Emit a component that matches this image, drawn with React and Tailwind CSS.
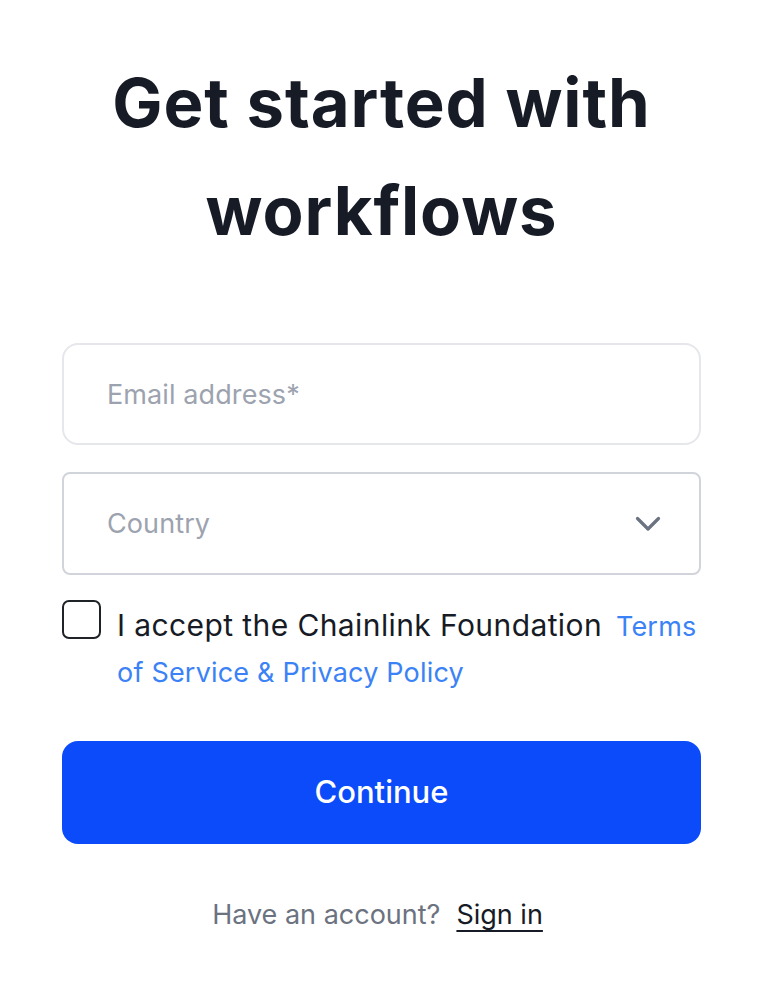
import React from "react";

export default function App() {
  return (
    <div className="min-h-screen bg-white" style={{ fontFamily: "Inter, 'Noto Sans', sans-serif" }}>
      <div className="flex flex-col pl-[62px] pr-[63px] pt-[49px]">
        <h1 className="text-center text-[67px] font-bold leading-[108px] text-[#161b26] tracking-[0.9px]">
          Get started with
          <br />
          workflows
        </h1>

        <div className="mt-[78px] flex flex-col gap-[27px]">
          <div className="flex h-[102px] items-center rounded-[16px] border-2 border-[#e5e7eb] px-[43px] pt-[2px]">
            <span className="text-[27px] text-[#9ca3af] tracking-[0.1px]">Email address*</span>
          </div>
          <div className="flex h-[103px] items-center justify-between rounded-[8px] border-2 border-[#d1d5db] pl-[43px] pr-[38px]">
            <span className="text-[27px] text-[#9ca3af] tracking-[0.1px] pt-[2px]">Country</span>
            <svg width="26" height="16" viewBox="0 0 26 16" fill="none">
              <path d="M2.5 2.5 L13 13 L23.5 2.5" stroke="#6b7280" strokeWidth="3.2" strokeLinecap="round" strokeLinejoin="round" />
            </svg>
          </div>
        </div>

        <div className="mt-[25px] flex items-start gap-[16px]">
          <div className="h-[39px] w-[39px] shrink-0 rounded-[7px] border-2 border-[#1f2328]" />
          <p className="mt-[3px] leading-[45px] text-[30px] tracking-[0.4px] text-[#161b26]">
            I accept the Chainlink Foundation{" "}
            <a className="ml-[5px] text-[27px] tracking-[0.2px] text-[#3b82f6]">Terms of Service &amp; Privacy Policy</a>
          </p>
        </div>

        <button className="mt-[46px] flex h-[103px] items-center justify-center rounded-[16px] bg-[#0b4bf9] text-[31px] font-medium text-white">
          Continue
        </button>

        <div className="mt-[51px] flex justify-center gap-[16px] pr-[8px] text-[27px]">
          <span className="text-[#6b7280]">Have an account?</span>
          <a className="text-[#161b26] underline underline-offset-[6px] decoration-2">Sign in</a>
        </div>
      </div>
    </div>
  );
}
